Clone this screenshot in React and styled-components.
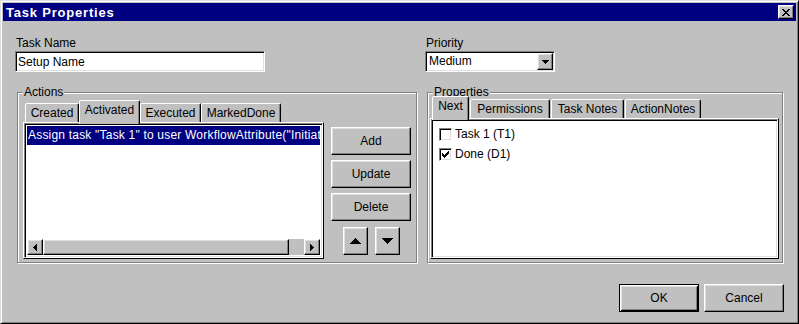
import React from 'react';
import styled, { createGlobalStyle, css } from 'styled-components';

const GlobalStyle = createGlobalStyle`
  html, body { margin: 0; padding: 0; background: #c0c0c0; }
  body { font-family: "Liberation Sans", Arial, sans-serif; font-size: 12px; color: #000; }
  * { box-sizing: border-box; }
`;

const raised = css`
  border: 1px solid;
  border-color: #fff #000 #000 #fff;
  box-shadow: inset -1px -1px #808080, inset 1px 1px #dfdfdf;
`;

const sunken = css`
  border: 1px solid;
  border-color: #808080 #fff #fff #808080;
  box-shadow: inset 1px 1px #000, inset -1px -1px #dfdfdf;
`;

const Window = styled.div`
  width: 799px;
  height: 324px;
  background: #c0c0c0;
  border: 1px solid;
  border-color: #dfdfdf #000 #000 #dfdfdf;
  box-shadow: inset 1px 1px #fff, inset -1px -1px #808080;
  padding: 2px;
  display: flex;
  flex-direction: column;
`;

const TitleBar = styled.div`
  flex: none;
  height: 18px;
  background: #000080;
  color: #fff;
  display: flex;
  align-items: center;
  justify-content: space-between;
  padding: 0 2px 0 3px;
  font-weight: bold;
  font-size: 13px;
  letter-spacing: 0.8px;
`;

const CloseButton = styled.div`
  ${raised}
  width: 16px;
  height: 14px;
  background: #c0c0c0;
  display: flex;
  align-items: center;
  justify-content: center;
`;

const Content = styled.div`
  flex: 1;
  display: grid;
  grid-template-columns: 410px 359px;
  grid-template-rows: auto auto auto;
  align-content: start;
  padding: 15px 12px 0 12px;
`;

const Field = styled.div`
  display: flex;
  flex-direction: column;
  gap: 1px;
`;

const Label = styled.label`
  line-height: 14px;
  padding-left: 1px;
`;

const TextInput = styled.input`
  ${sunken}
  width: ${p => p.$w}px;
  height: 21px;
  background: #fff;
  font: inherit;
  color: #000;
  padding: 0 2px;
  outline: none;
`;

const Select = styled.div`
  ${sunken}
  width: ${p => p.$w}px;
  height: 21px;
  background: #fff;
  display: flex;
  align-items: center;
  padding: 1px;
`;

const SelectValue = styled.span`
  flex: 1;
  padding-left: 2px;
  line-height: 17px;
`;

const DropButton = styled.div`
  ${raised}
  width: 16px;
  height: 17px;
  background: #c0c0c0;
  display: flex;
  align-items: center;
  justify-content: center;
`;

const GroupBox = styled.div`
  position: relative;
  margin: 20px 0 0 2px;
  width: ${p => p.$w}px;
  height: 171px;
  border: 1px solid #808080;
  box-shadow: inset 1px 1px #fff, 1px 1px #fff;
  padding: ${p => p.$pt}px 3px 3px ${p => p.$pl}px;
  display: flex;
  align-items: stretch;
`;

const Legend = styled.span`
  position: absolute;
  top: -8px;
  left: 5px;
  z-index: 1;
  line-height: 14px;
  padding: 0 1px;
  background: #c0c0c0;
`;

const TabArea = styled.div`
  width: ${p => p.$w}px;
  display: flex;
  flex-direction: column;
`;

const TabRow = styled.div`
  flex: none;
  height: 22px;
  display: flex;
  align-items: flex-end;
  gap: ${p => p.$gap}px;
  padding-left: 2px;
  position: relative;
  z-index: 2;
`;

const Tab = styled.div`
  width: ${p => p.$w}px;
  height: ${p => (p.$active ? 24 : 19)}px;
  margin-bottom: ${p => (p.$active ? -2 : 0)}px;
  background: #c0c0c0;
  border: 1px solid;
  border-bottom: none;
  border-color: #fff #000 transparent #fff;
  border-radius: 2px 2px 0 0;
  box-shadow: inset -1px 0 #808080;
  padding-top: 2px;
  text-align: center;
  line-height: 14px;
  white-space: nowrap;
  position: relative;
  z-index: ${p => (p.$active ? 2 : 1)};
`;

const TabPanel = styled.div`
  ${raised}
  flex: 1;
  background: #c0c0c0;
  display: flex;
`;

const ListBox = styled.div`
  ${sunken}
  flex: 1;
  background: #fff;
  display: flex;
  flex-direction: column;
  padding: 2px;
  min-width: 0;
`;

const ListRows = styled.div`
  flex: 1;
  overflow: hidden;
`;

const ListRow = styled.div`
  height: 19px;
  line-height: 19px;
  padding-left: 1px;
  white-space: nowrap;
  overflow: hidden;
  letter-spacing: 0.2px;
  background: ${p => (p.$selected ? '#000080' : 'transparent')};
  color: ${p => (p.$selected ? '#fff' : '#000')};
`;

const HScroll = styled.div`
  flex: none;
  height: 16px;
  display: flex;
  background: #c0c0c0;
`;

const ScrollButton = styled.div`
  ${raised}
  width: 16px;
  height: 16px;
  background: #c0c0c0;
  display: flex;
  align-items: center;
  justify-content: center;
`;

const ScrollThumb = styled.div`
  ${raised}
  flex: 1;
  background: #c0c0c0;
`;

const ScrollTrack = styled.div`
  width: 15px;
  background: #c0c0c0;
`;

const ButtonColumn = styled.div`
  width: 80px;
  margin-left: 7px;
  padding-top: 27px;
  display: flex;
  flex-direction: column;
  gap: 5px;
`;

const PushButton = styled.div`
  ${raised}
  width: ${p => p.$w || 80}px;
  height: 28px;
  background: #c0c0c0;
  display: flex;
  align-items: center;
  justify-content: center;
  ${p =>
    p.$default &&
    css`
      border-color: #000;
      box-shadow: inset 1px 1px #fff, inset -1px -1px #000, inset 2px 2px #dfdfdf,
        inset -2px -2px #808080;
    `}
`;

const ArrowRow = styled.div`
  display: flex;
  justify-content: center;
  gap: 7px;
  margin-top: 1px;
`;

const CheckList = styled.div`
  ${sunken}
  flex: 1;
  background: #fff;
  padding: 4px 0 0 7px;
  display: flex;
  flex-direction: column;
`;

const CheckRow = styled.div`
  height: 20px;
  display: flex;
  align-items: center;
  gap: 3px;
`;

const CheckBox = styled.div`
  ${sunken}
  width: 13px;
  height: 13px;
  background: #fff;
  display: flex;
  align-items: center;
  justify-content: center;
`;

const Footer = styled.div`
  grid-column: 1 / -1;
  justify-self: end;
  margin-top: 21px;
  display: flex;
  gap: 5px;
`;

const Svg = styled.svg`
  display: block;
`;

const PixelIcon = ({ rows }) => {
  const w = rows[0].length;
  const h = rows.length;
  return (
    <Svg width={w} height={h} viewBox={`0 0 ${w} ${h}`} shapeRendering="crispEdges">
      {rows.flatMap((r, y) =>
        [...r].map((c, x) =>
          c === '#' ? <rect key={`${x}-${y}`} x={x} y={y} width="1" height="1" fill="#000" /> : null
        )
      )}
    </Svg>
  );
};

const CLOSE = ['##....##', '.##..##.', '..####..', '...##...', '..####..', '.##..##.', '##....##'];
const CHECK = ['......#', '.....##', '#...###', '##.###.', '#####..', '.###...', '..#....'];
const DROP = ['#######', '.#####.', '..###..', '...#...'];
const LEFT = ['...#', '..##', '.###', '####', '.###', '..##', '...#'];
const RIGHT = ['#...', '##..', '###.', '####', '###.', '##..', '#...'];
const UP = ['.....#.....', '....###....', '...#####...', '..#######..', '.#########.', '###########'];
const DOWN = ['###########', '.#########.', '..#######..', '...#####...', '....###....', '.....#.....'];

const actionTabs = [
  { label: 'Created', w: 54 },
  { label: 'Activated', w: 61, active: true },
  { label: 'Executed', w: 61 },
  { label: 'MarkedDone', w: 80 },
];

const propTabs = [
  { label: 'Next', w: 37, active: true },
  { label: 'Permissions', w: 80 },
  { label: 'Task Notes', w: 73 },
  { label: 'ActionNotes', w: 76 },
];

const nextItems = [
  { label: 'Task 1 (T1)', checked: false },
  { label: 'Done (D1)', checked: true },
];

export default function App() {
  return (
    <>
      <GlobalStyle />
      <Window>
        <TitleBar>
          <span>Task Properties</span>
          <CloseButton>
            <PixelIcon rows={CLOSE} />
          </CloseButton>
        </TitleBar>
        <Content>
          <Field>
            <Label>Task Name</Label>
            <TextInput $w={250} defaultValue="Setup Name" readOnly />
          </Field>
          <Field>
            <Label>Priority</Label>
            <Select $w={130}>
              <SelectValue>Medium</SelectValue>
              <DropButton>
                <PixelIcon rows={DROP} />
              </DropButton>
            </Select>
          </Field>

          <GroupBox $w={400} $pt={7} $pl={5}>
            <Legend>Actions</Legend>
            <TabArea $w={301}>
              <TabRow $gap={0}>
                {actionTabs.map(t => (
                  <Tab key={t.label} $w={t.w} $active={t.active}>
                    {t.label}
                  </Tab>
                ))}
              </TabRow>
              <TabPanel>
                <ListBox>
                  <ListRows>
                    <ListRow $selected>
                      Assign task "Task 1" to user WorkflowAttribute("Initiator")
                    </ListRow>
                  </ListRows>
                  <HScroll>
                    <ScrollButton>
                      <PixelIcon rows={LEFT} />
                    </ScrollButton>
                    <ScrollThumb />
                    <ScrollTrack />
                    <ScrollButton>
                      <PixelIcon rows={RIGHT} />
                    </ScrollButton>
                  </HScroll>
                </ListBox>
              </TabPanel>
            </TabArea>
            <ButtonColumn>
              <PushButton>Add</PushButton>
              <PushButton>Update</PushButton>
              <PushButton>Delete</PushButton>
              <ArrowRow>
                <PushButton $w={25}>
                  <PixelIcon rows={UP} />
                </PushButton>
                <PushButton $w={25}>
                  <PixelIcon rows={DOWN} />
                </PushButton>
              </ArrowRow>
            </ButtonColumn>
          </GroupBox>

          <GroupBox $w={356} $pt={3} $pl={2}>
            <Legend>Properties</Legend>
            <TabArea $w={349}>
              <TabRow $gap={1}>
                {propTabs.map(t => (
                  <Tab key={t.label} $w={t.w} $active={t.active}>
                    {t.label}
                  </Tab>
                ))}
              </TabRow>
              <TabPanel>
                <CheckList>
                  {nextItems.map(it => (
                    <CheckRow key={it.label}>
                      <CheckBox>{it.checked && <PixelIcon rows={CHECK} />}</CheckBox>
                      <span>{it.label}</span>
                    </CheckRow>
                  ))}
                </CheckList>
              </TabPanel>
            </TabArea>
          </GroupBox>

          <Footer>
            <PushButton $default>OK</PushButton>
            <PushButton>Cancel</PushButton>
          </Footer>
        </Content>
      </Window>
    </>
  );
}
